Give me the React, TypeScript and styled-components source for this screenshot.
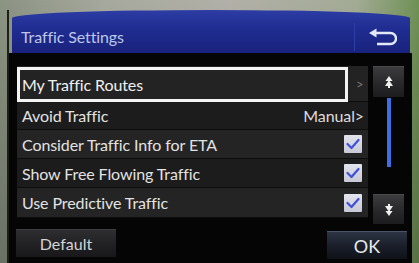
import React from "react";
import styled, { createGlobalStyle } from "styled-components";

const Global = createGlobalStyle`
  html, body { margin: 0; padding: 0; background: #000; }
  body { font-family: Lato, "Open Sans", sans-serif; }
  * { box-sizing: border-box; }
`;

const Frame = styled.div`
  width: 419px;
  height: 263px;
  overflow: hidden;
  padding: 10px 0 0 7px;
  background:
    linear-gradient(180deg, rgba(0,0,0,0) 0%, rgba(40,50,35,0.35) 100%),
    linear-gradient(90deg, #8b9383 0%, #a6a99e 25%, #b2b0a8 55%, #a3ab95 85%, #6f9155 100%);
`;

const Screen = styled.div`
  width: 405px;
  height: 253px;
  border-left: 2px solid #1c2018;
  display: flex;
  flex-direction: column;
`;

const Header = styled.div`
  height: 43px;
  margin: 0 2px 0 3px;
  padding-top: 10px;
  display: flex;
  align-items: center;
  border-top-left-radius: 50% 8px;
  border-top-right-radius: 50% 8px;
  background: linear-gradient(180deg, #2d3da4 0%, #1f2c90 45%, #19227c 100%);
`;

const Title = styled.div`
  flex: 1;
  padding-left: 9px;
  font-size: 16px;
  color: #bcc6ea;
  letter-spacing: -0.1px;
`;

const HeaderSep = styled.div`
  width: 1px;
  height: 28px;
  background: #2f3ea6;
`;

const BackButton = styled.div`
  width: 55px;
  display: flex;
  justify-content: center;
  align-items: center;
`;

const Body = styled.div`
  flex: 1;
  background: #050505;
  padding: 13px 0 0 8px;
  display: flex;
  flex-direction: column;
`;

const Main = styled.div`
  display: flex;
  gap: 5px;
  height: 158px;
`;

const List = styled.div`
  width: 351px;
  display: flex;
  flex-direction: column;
`;

const Row = styled.div<{ $h: number; $alt?: boolean }>`
  height: ${(p) => p.$h}px;
  display: flex;
  align-items: center;
  padding: 0 4px 0 5px;
  background: ${(p) => (p.$alt ? "#242424" : "#1c1c1c")};
  border-bottom: 1px solid #0c0c0c;
  color: #e2e2e2;
  font-size: 16px;
  letter-spacing: -0.1px;
`;

const FocusRow = styled.div`
  height: 36px;
  display: flex;
  align-items: center;
  background: #232323;
  padding-top: 1px;
  border-bottom: 1px solid #0c0c0c;
`;

const FocusBox = styled.div`
  width: 331px;
  height: 35px;
  border: 3px solid #f4f4f4;
  padding-left: 2px;
  display: flex;
  align-items: center;
  color: #f0f0f0;
  font-size: 16px;
  letter-spacing: -0.1px;
`;

const Chevron = styled.span`
  margin-left: 8px;
  color: #7a7a7a;
  font-size: 13px;
`;

const Label = styled.span`
  flex: 1;
`;

const Value = styled.span`
  color: #dcdcdc;
`;

const Check = styled.div`
  width: 18px;
  height: 18px;
  margin-right: 2px;
  border-radius: 1px;
  background: linear-gradient(180deg, #e4e4ee 0%, #c8c8d6 100%);
  display: flex;
  align-items: center;
  justify-content: center;
`;

const ScrollCol = styled.div`
  width: 31px;
  display: flex;
  flex-direction: column;
  align-items: center;
  padding-top: -1px;
`;

const ScrollBtn = styled.div<{ $h: number }>`
  width: 31px;
  height: ${(p) => p.$h}px;
  background: linear-gradient(180deg, #3c3c3e 0%, #28282a 55%, #1c1c1e 100%);
  border-top: 1px solid #4a4a4c;
  display: flex;
  align-items: center;
  justify-content: center;
`;

const Track = styled.div`
  flex: 1;
  width: 4px;
  padding-top: 1px;
  display: flex;
  flex-direction: column;
`;

const Thumb = styled.div`
  height: 69px;
  background: #3b6fe2;
`;

const Footer = styled.div`
  display: flex;
  justify-content: space-between;
  align-items: flex-start;
  width: 391px;
  margin: 5px 0 0 -1px;
`;

const Button = styled.div<{ $w: number; $ok?: boolean }>`
  width: ${(p) => p.$w}px;
  height: 28px;
  margin-top: ${(p) => (p.$ok ? 2 : 0)}px;
  display: flex;
  align-items: center;
  justify-content: center;
  font-size: ${(p) => (p.$ok ? 18 : 16)}px;
  color: ${(p) => (p.$ok ? "#e8e8ec" : "#d4d4d4")};
  border-top: 1px solid ${(p) => (p.$ok ? "#4a5468" : "#3c3c3c")};
  background: ${(p) =>
    p.$ok
      ? "linear-gradient(180deg, #2c3444 0%, #1a1f2a 50%, #0f1218 100%)"
      : "linear-gradient(180deg, #2e2e30 0%, #222224 50%, #18181a 100%)"};
`;

const BackIcon = () => (
  <svg width="28" height="18" viewBox="0 0 28 18">
    <polygon points="0,5 7.5,0.5 7.5,9.5" fill="#e2e8f6" />
    <path d="M6 5 H21.5 A5.5 5.5 0 0 1 21.5 16 H8" stroke="#e2e8f6" strokeWidth="2.4" fill="none" />
  </svg>
);

const CheckMark = () => (
  <svg width="14" height="12" viewBox="0 0 14 12">
    <path d="M1.5 6 L5.5 10 L12.5 2" stroke="#3d52d6" strokeWidth="2.2" fill="none" strokeLinecap="round" strokeLinejoin="round" />
  </svg>
);

const UpIcon = () => (
  <svg width="8" height="12" viewBox="0 0 8 12">
    <polygon points="4,0 7.5,5 0.5,5" fill="#f0f0f0" />
    <polygon points="4,4 8,10 0,10" fill="#f0f0f0" />
    <rect x="3" y="9" width="2" height="3" fill="#f0f0f0" />
  </svg>
);

const DownIcon = () => (
  <svg width="8" height="12" viewBox="0 0 8 12">
    <rect x="3" y="0" width="2" height="3" fill="#f0f0f0" />
    <polygon points="0,2 8,2 4,8" fill="#f0f0f0" />
    <polygon points="0.5,7 7.5,7 4,12" fill="#f0f0f0" />
  </svg>
);

export default function App() {
  return (
    <>
      <Global />
      <Frame>
        <Screen>
          <Header>
            <Title>Traffic Settings</Title>
            <HeaderSep />
            <BackButton>
              <BackIcon />
            </BackButton>
          </Header>
          <Body>
            <Main>
              <List>
                <FocusRow>
                  <FocusBox>My Traffic Routes</FocusBox>
                  <Chevron>&gt;</Chevron>
                </FocusRow>
                <Row $h={28}>
                  <Label>Avoid Traffic</Label>
                  <Value>Manual&gt;</Value>
                </Row>
                <Row $h={29} $alt>
                  <Label>Consider Traffic Info for ETA</Label>
                  <Check><CheckMark /></Check>
                </Row>
                <Row $h={29}>
                  <Label>Show Free Flowing Traffic</Label>
                  <Check><CheckMark /></Check>
                </Row>
                <Row $h={30} $alt>
                  <Label>Use Predictive Traffic</Label>
                  <Check><CheckMark /></Check>
                </Row>
              </List>
              <ScrollCol>
                <ScrollBtn $h={31}>
                  <UpIcon />
                </ScrollBtn>
                <Track>
                  <Thumb />
                </Track>
                <ScrollBtn $h={30}>
                  <DownIcon />
                </ScrollBtn>
              </ScrollCol>
            </Main>
            <Footer>
              <Button $w={100}>Default</Button>
              <Button $w={80} $ok>OK</Button>
            </Footer>
          </Body>
        </Screen>
      </Frame>
    </>
  );
}
